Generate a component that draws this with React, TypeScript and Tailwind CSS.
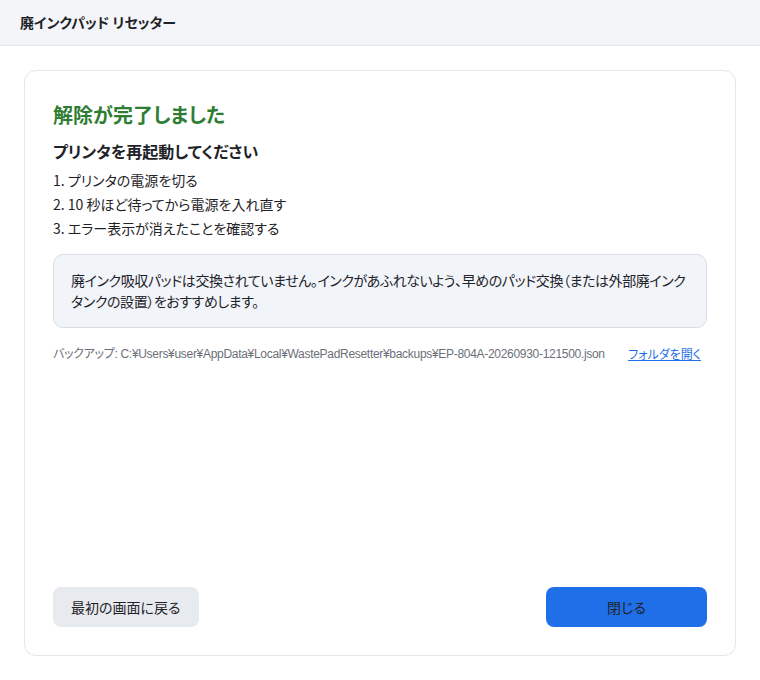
export default function App() {
  return (
    <div className="h-screen flex flex-col bg-white text-[#1f2328] font-['Noto_Sans_CJK_JP','Noto_Sans',sans-serif] [font-feature-settings:'palt']">
      {/* Header */}
      <header className="h-[46px] shrink-0 flex items-center px-5 bg-[#f3f5f9] border-b border-[#e3e7ee]">
        <h1 className="text-[14px] font-bold text-[#1f2328]">廃インクパッド リセッター</h1>
      </header>

      <main className="flex-1 min-h-0 p-6">
        <div className="h-full flex flex-col rounded-xl border border-[#e3e6ec] bg-white px-7 pt-[30px] pb-7">
          <h2 className="text-[20px] font-bold text-[#2e7d32] leading-7">解除が完了しました</h2>
          <h3 className="mt-[10px] text-[16px] font-bold leading-6">プリンタを再起動してください</h3>
          <ol className="mt-[5px] text-[14px] leading-6">
            <li>1. プリンタの電源を切る</li>
            <li>2. 10 秒ほど待ってから電源を入れ直す</li>
            <li>3. エラー表示が消えたことを確認する</li>
          </ol>

          <div className="mt-[14px] rounded-[10px] border border-[#d9dee6] bg-[#f1f4f9] px-[17px] py-[15px] text-[14px] leading-[21px] tracking-[-0.03em]">
            <span className="block whitespace-nowrap">
              廃インク吸収パッドは交換されていません。インクがあふれないよう、早めのパッド交換（または外部廃インク
            </span>
            <span className="block whitespace-nowrap">タンクの設置）をおすすめします。</span>
          </div>

          <div className="mt-[17px] flex items-center justify-between gap-3 text-[12px] whitespace-nowrap">
            <span className="text-[#6b7078] font-['Liberation_Sans','Noto_Sans_CJK_JP',sans-serif] tracking-[-0.025em]">
              バックアップ: C:¥Users¥user¥AppData¥Local¥WastePadResetter¥backups¥EP-804A-20260930-121500.json
            </span>
            <a href="#" className="shrink-0 text-[#1f6fe8] underline mr-[6px]">フォルダを開く</a>
          </div>

          <div className="flex-1" />

          <div className="flex items-center justify-between">
            <button className="h-10 px-[18px] rounded-lg bg-[#e7eaef] text-[14px] text-[#1f2328]">
              最初の画面に戻る
            </button>
            <button className="h-10 w-[161px] rounded-lg bg-[#1f6fe8] text-[14px] text-[#1f2328]">
              閉じる
            </button>
          </div>
        </div>
      </main>
    </div>
  );
}
